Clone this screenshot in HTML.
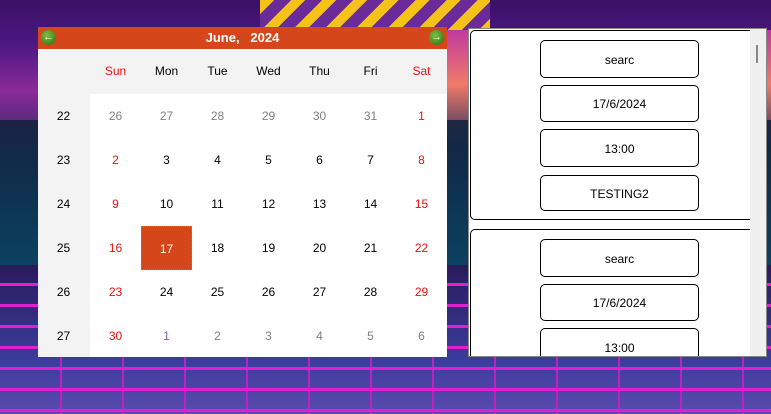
<!DOCTYPE html>
<html><head><style>
*{margin:0;padding:0;box-sizing:border-box}
body{width:771px;height:414px;overflow:hidden;position:relative;font-family:"Liberation Sans",sans-serif;
background:linear-gradient(180deg,#3a1266 0%,#4a1680 10%,#8a2a9a 22%,#1a2a55 40%,#0e2a48 60%,#1a1a4a 80%,#3a2a7a 100%);}
.sun{position:absolute;left:260px;top:0;width:230px;height:30px;background:repeating-linear-gradient(135deg,#f5c21a 0 10px,#6a2a9a 10px 22px);}
.sun2{position:absolute;left:440px;top:30px;width:331px;height:120px;background:linear-gradient(180deg,#c03aa0,#f07a6a 45%,#1a2a5a);}
.teal{position:absolute;left:0;top:120px;width:771px;height:160px;background:linear-gradient(180deg,#10203a,#0a4a6a);opacity:.85}
.grid{position:absolute;left:0;top:265px;width:771px;height:149px;
background:repeating-linear-gradient(180deg,transparent 0 18px,#e020d0 18px 21px),repeating-linear-gradient(90deg,transparent 0 60px,#c020c0 60px 62px),linear-gradient(180deg,#2a1a5a,#3a3a9a 60%,#5a4ab0);}
.cal{position:absolute;left:38px;top:27px;width:409px;height:330px;background:#fff;}
.hdr{height:22px;background:#d5471a;color:#fff;font-weight:bold;font-size:13px;text-align:center;line-height:22px;position:relative}
.arr{position:absolute;top:3px;width:15px;height:15px;border-radius:50%;background:radial-gradient(circle at 40% 35%,#7ac040,#2e6a10);color:#fff;font-size:11px;line-height:15px;text-align:center;font-weight:bold}
.dh{position:absolute;left:0;top:22px;width:409px;height:45px;background:#f3f3f3}
.wk{position:absolute;left:0;top:67px;width:52px;height:263px;background:#f3f3f3}
.c{position:absolute;width:51px;height:44px;line-height:44px;text-align:center;font-size:12px;color:#000}
.r{color:#e81010}.g{color:#808080}.p{color:#8a5aa8}
.sel{background:#d5471a;color:#fff;border:1px dotted #2aa0e0}
.panel{position:absolute;left:468px;top:28px;width:299px;height:329px;background:#fff;border:1px solid #888;overflow:hidden}
.sb{position:absolute;right:0;top:0;width:16px;height:100%;background:#f0f0f0}
.sb i{position:absolute;left:6px;top:16px;width:2px;height:18px;background:#888}
.card{position:absolute;left:1px;width:290px;border:1px solid #000;border-radius:5px;background:#fff}
.b{position:absolute;left:69px;width:159px;border:1px solid #000;border-radius:5px;text-align:center;font-size:12px;color:#000}
</style></head><body>
<div class="sun"></div><div class="sun2"></div><div class="teal"></div><div class="grid"></div>
<div class="cal">
<div class="hdr"><div class="arr" style="left:3px">&#8592;</div>June,&nbsp;&nbsp; 2024<div class="arr" style="right:3px">&#8594;</div></div>
<div class="dh"></div><div class="wk"></div>
<div class="c r" style="left:52px;top:22px">Sun</div><div class="c" style="left:103px;top:22px">Mon</div><div class="c" style="left:154px;top:22px">Tue</div><div class="c" style="left:205px;top:22px">Wed</div><div class="c" style="left:256px;top:22px">Thu</div><div class="c" style="left:307px;top:22px">Fri</div><div class="c r" style="left:358px;top:22px">Sat</div>
<div id="g"></div>
</div>
<div class="panel">
<div class="card" style="top:1px;height:190px">
<div class="b" style="top:9px;height:38px;line-height:38px">searc</div>
<div class="b" style="top:54px;height:37px;line-height:37px">17/6/2024</div>
<div class="b" style="top:98px;height:38px;line-height:38px">13:00</div>
<div class="b" style="top:144px;height:36px;line-height:36px">TESTING2</div>
</div>
<div class="card" style="top:200px;height:140px">
<div class="b" style="top:9px;height:38px;line-height:38px">searc</div>
<div class="b" style="top:54px;height:37px;line-height:37px">17/6/2024</div>
<div class="b" style="top:98px;height:40px;line-height:38px">13:00</div>
</div>
<div class="sb"><i></i></div>
</div>
<script>
var rows=[[22,[26,27,28,29,30,31,1]],[23,[2,3,4,5,6,7,8]],[24,[9,10,11,12,13,14,15]],[25,[16,17,18,19,20,21,22]],[26,[23,24,25,26,27,28,29]],[27,[30,1,2,3,4,5,6]]];
var h="";
rows.forEach(function(r,i){var t=67+44*i;h+='<div class="c" style="left:0;top:'+t+'px">'+r[0]+'</div>';
r[1].forEach(function(d,j){var cl="";
if(i==0&&j<6)cl="g";else if(i==5&&j>0)cl=(j==1?"p":"g");else if(j==0||j==6)cl="r";
if(i==3&&j==1)cl="sel";
h+='<div class="c '+cl+'" style="left:'+(52+51*j)+'px;top:'+t+'px">'+d+'</div>';});});
document.getElementById("g").innerHTML=h;
</script>
</body></html>
